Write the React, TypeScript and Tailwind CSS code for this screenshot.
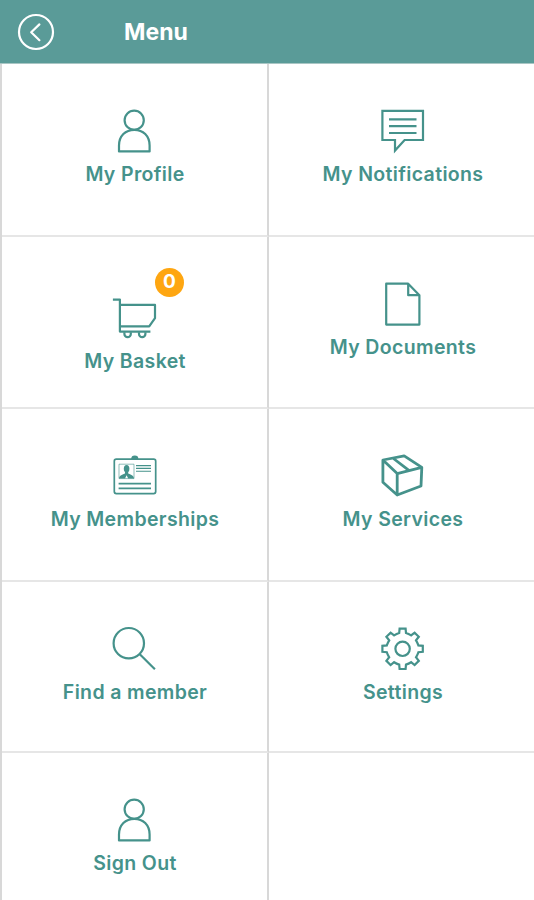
import type { ReactNode } from "react";

type MenuItem = {
  label: string;
  icon: ReactNode;
  badge?: number;
};

function Icon({
  children,
  strokeWidth = 2.2,
}: {
  children: ReactNode;
  strokeWidth?: number;
}) {
  return (
    <svg
      viewBox="0 0 44 44"
      className="size-11 shrink-0 overflow-visible"
      fill="none"
      stroke="currentColor"
      strokeWidth={strokeWidth}
      strokeLinejoin="round"
      aria-hidden="true"
    >
      {children}
    </svg>
  );
}

const personIcon = (
  <Icon>
    <circle cx="22.2" cy="12.2" r="9.6" />
    <path d="M7 43.4V37.5C7 28 13.5 21.8 22.3 21.8S37.6 28 37.6 37.5V43.4Z" />
  </Icon>
);

const notificationsIcon = (
  <Icon>
    <path d="M2.4 2.8H43V32H24.6L15 42.6V32H2.4Z" strokeLinejoin="miter" />
    <path d="M9 11.4H36.5M9 18.2H36.5M9 25H36.5" />
  </Icon>
);

const basketIcon = (
  <Icon>
    <path d="M.9 2.6H7.9V34.6H38.4M7.9 7.8H43V21.2L37.2 29.4H7.9" />
    <path d="M12.4 35.2V37A3.2 3.2 0 0 0 18.8 37V35.2M27 35.2V37A3.2 3.2 0 0 0 33.4 37V35.2" />
  </Icon>
);

const documentIcon = (
  <Icon>
    <path d="M6.2 2.7H28.2L39.4 14.2V43.6H6.2ZM28.2 2.7V14.2H39.4" />
  </Icon>
);

const membershipIcon = (
  <Icon strokeWidth={1.7}>
    <rect x="2.3" y="6.2" width="41.4" height="34.4" rx="2" />
    <path d="M19.2 6A3.6 3.4 0 0 1 26.4 6Z" fill="currentColor" stroke="none" />
    <rect x="7" y="11.2" width="15" height="14.4" strokeWidth="0.6" />
    <ellipse cx="14.6" cy="15.7" rx="2.8" ry="3.8" fill="currentColor" stroke="none" />
    <path
      d="M7 25.6C7.2 22.6 9.6 22.4 13 20.6V18H16.2V20.6C19.6 22.4 21.8 22.6 22 25.6H16.2L14.6 22.3L13 25.6Z"
      fill="currentColor"
      stroke="none"
    />
    <path d="M24 12.6H39M24 15.4H39M24 18.2H39" strokeWidth="1.1" />
    <path d="M6.6 30.6H39M6.6 35.4H39" />
  </Icon>
);

const servicesIcon = (
  <Icon strokeWidth={2.8}>
    <path d="M2.9 7L24.2 2.8L41.8 14.4L41 33L17.2 42L2.9 29.2ZM2.9 7L17.2 20.6L41.8 14.4M17.2 20.6V42M12.8 5L29.2 17.6" />
  </Icon>
);

const searchIcon = (
  <Icon>
    <circle cx="16.8" cy="17.2" r="15.2" />
    <path d="M27.8 28.2L42.9 43.2" />
  </Icon>
);

const settingsIcon = (
  <Icon>
    <g transform="translate(22.6 22.8)">
      <path
        strokeLinejoin="miter"
        d="M-3-20.2H3L3.4-15.8Q6-15 8.5-13.4L12-16.2L16.2-12L13.4-8.5Q15-6 15.8-3.4L20.2-3V3L15.8 3.4Q15 6 13.4 8.5L16.2 12L12 16.2L8.5 13.4Q6 15 3.4 15.8L3 20.2H-3L-3.4 15.8Q-6 15-8.5 13.4L-12 16.2L-16.2 12L-13.4 8.5Q-15 6-15.8 3.4L-20.2 3V-3L-15.8-3.4Q-15-6-13.4-8.5L-16.2-12L-12-16.2L-8.5-13.4Q-6-15-3.4-15.8Z"
      />
      <circle r="7.2" />
    </g>
  </Icon>
);

const items: MenuItem[] = [
  { label: "My Profile", icon: personIcon },
  { label: "My Notifications", icon: notificationsIcon },
  { label: "My Basket", icon: basketIcon, badge: 0 },
  { label: "My Documents", icon: documentIcon },
  { label: "My Memberships", icon: membershipIcon },
  { label: "My Services", icon: servicesIcon },
  { label: "Find a member", icon: searchIcon },
  { label: "Settings", icon: settingsIcon },
  { label: "Sign Out", icon: personIcon },
];

function MenuCell({ label, icon, badge }: MenuItem) {
  const hasBadge = badge !== undefined;

  return (
    <button
      type="button"
      className={`flex flex-col items-center border-r-2 border-b-2 border-r-[#d8d8d8] border-b-[#e6e6e6] ${
        hasBadge ? "pt-[60px]" : "pt-11"
      }`}
    >
      <span className="relative mr-px">
        {icon}
        {hasBadge ? (
          <span className="absolute -top-[29px] left-[43px] grid size-[29px] place-items-center rounded-full bg-[#fea611] text-[19px] font-bold text-white">
            {badge}
          </span>
        ) : null}
      </span>
      <span
        className={`pl-px text-[19.5px] leading-7 font-semibold tracking-[0.35px] whitespace-nowrap ${
          hasBadge ? "mt-1.5" : "mt-2"
        }`}
      >
        {label}
      </span>
    </button>
  );
}

export default function App() {
  return (
    <div className="flex h-[900px] w-[534px] flex-col overflow-hidden bg-white font-['Inter',sans-serif] text-[#45928b]">
      <header className="flex h-16 shrink-0 items-center border-b border-[#a9c6c4] bg-[#5a9b98] pl-[17px] text-white">
        <button type="button" aria-label="Back">
          <svg
            viewBox="0 0 38 38"
            className="size-[38px]"
            fill="none"
            stroke="currentColor"
            strokeWidth="2.2"
            strokeLinecap="round"
            strokeLinejoin="round"
          >
            <circle cx="19" cy="19" r="17" />
            <path d="M22.4 11.4L14.2 19.2L22.4 27.2" />
          </svg>
        </button>
        <h1 className="ml-[69px] pt-0.5 text-[23px] font-bold">Menu</h1>
      </header>
      <main className="grid w-[538px] flex-1 grid-cols-[267px_269px] grid-rows-[173px_172px_173px_171px_173px] border-l-2 border-[#d8d8d8]">
        {items.map((item) => (
          <MenuCell key={item.label} {...item} />
        ))}
      </main>
    </div>
  );
}
